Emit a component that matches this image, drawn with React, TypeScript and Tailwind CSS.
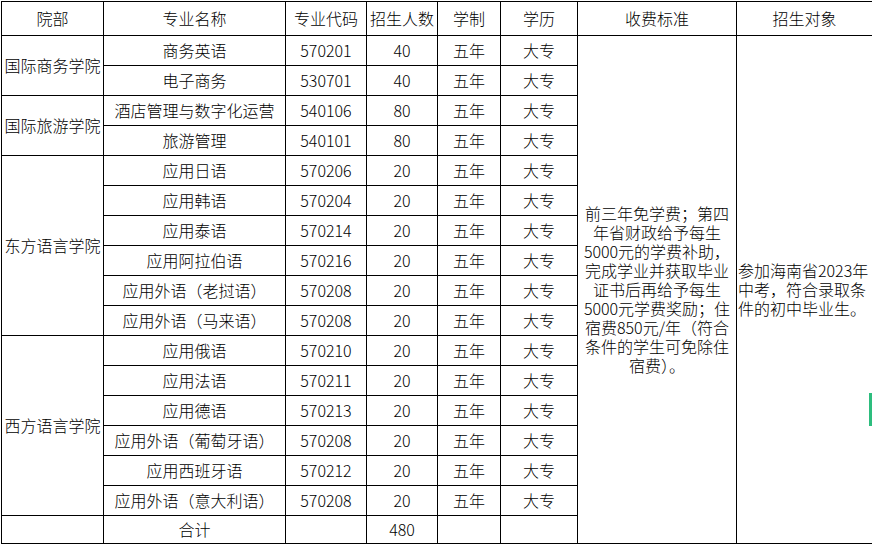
import React from "react";

type Row = {
  dept?: string;
  span?: number;
  name: string;
  code: string;
  num: string;
};

const rows: Row[] = [
  { dept: "国际商务学院", span: 2, name: "商务英语", code: "570201", num: "40" },
  { name: "电子商务", code: "530701", num: "40" },
  { dept: "国际旅游学院", span: 2, name: "酒店管理与数字化运营", code: "540106", num: "80" },
  { name: "旅游管理", code: "540101", num: "80" },
  { dept: "东方语言学院", span: 6, name: "应用日语", code: "570206", num: "20" },
  { name: "应用韩语", code: "570204", num: "20" },
  { name: "应用泰语", code: "570214", num: "20" },
  { name: "应用阿拉伯语", code: "570216", num: "20" },
  { name: "应用外语（老挝语）", code: "570208", num: "20" },
  { name: "应用外语（马来语）", code: "570208", num: "20" },
  { dept: "西方语言学院", span: 6, name: "应用俄语", code: "570210", num: "20" },
  { name: "应用法语", code: "570211", num: "20" },
  { name: "应用德语", code: "570213", num: "20" },
  { name: "应用外语（葡萄牙语）", code: "570208", num: "20" },
  { name: "应用西班牙语", code: "570212", num: "20" },
  { name: "应用外语（意大利语）", code: "570208", num: "20" },
];

const feeLines = [
  "前三年免学费；第四",
  "年省财政给予每生",
  "5000元的学费补助，",
  "完成学业并获取毕业",
  "证书后再给予每生",
  "5000元学费奖励；住",
  "宿费850元/年（符合",
  "条件的学生可免除住",
  "宿费）。",
];

const targetLines = ["参加海南省2023年", "中考，符合录取条", "件的初中毕业生。"];

const cell = "border border-black p-0 text-center align-middle whitespace-nowrap";

export default function App() {
  return (
    <div
      className="relative h-[544px] w-[872px] overflow-hidden bg-white pl-px pt-px text-[16px] font-light leading-[19px] text-black"
      style={{ fontFamily: '"Noto Sans CJK SC", "Noto Sans", sans-serif' }}
    >
      <table className="w-[871px] table-fixed border-collapse">
        <colgroup>
          <col className="w-[102px]" />
          <col className="w-[182px]" />
          <col className="w-[81px]" />
          <col className="w-[71px]" />
          <col className="w-[63px]" />
          <col className="w-[77px]" />
          <col className="w-[159px]" />
          <col className="w-[136px]" />
        </colgroup>
        <tbody>
          <tr className="h-[34px]">
            <td className={cell}>院部</td>
            <td className={cell}>专业名称</td>
            <td className={cell}>专业代码</td>
            <td className={cell}>招生人数</td>
            <td className={cell}>学制</td>
            <td className={cell}>学历</td>
            <td className={cell}>收费标准</td>
            <td className={cell}>招生对象</td>
          </tr>
          {rows.map((r, i) => (
            <tr key={i} className="h-[30px]">
              {r.dept && (
                <td rowSpan={r.span} className={cell}>
                  {r.dept}
                </td>
              )}
              <td className={cell}>{r.name}</td>
              <td className={cell}>{r.code}</td>
              <td className={cell}>{r.num}</td>
              <td className={cell}>五年</td>
              <td className={cell}>大专</td>
              {i === 0 && (
                <>
                  <td rowSpan={17} className={cell}>
                    {feeLines.map((l) => (
                      <div key={l}>{l}</div>
                    ))}
                  </td>
                  <td rowSpan={17} className={cell + " text-left pl-px"}>
                    {targetLines.map((l) => (
                      <div key={l}>{l}</div>
                    ))}
                  </td>
                </>
              )}
            </tr>
          ))}
          <tr className="h-[28px]">
            <td className={cell}></td>
            <td className={cell}>合计</td>
            <td className={cell}></td>
            <td className={cell}>480</td>
            <td className={cell}></td>
            <td className={cell}></td>
          </tr>
        </tbody>
      </table>
      <div className="absolute left-[869px] top-[393px] h-[33px] w-[3px] bg-[#2dbd7e]" />
    </div>
  );
}
